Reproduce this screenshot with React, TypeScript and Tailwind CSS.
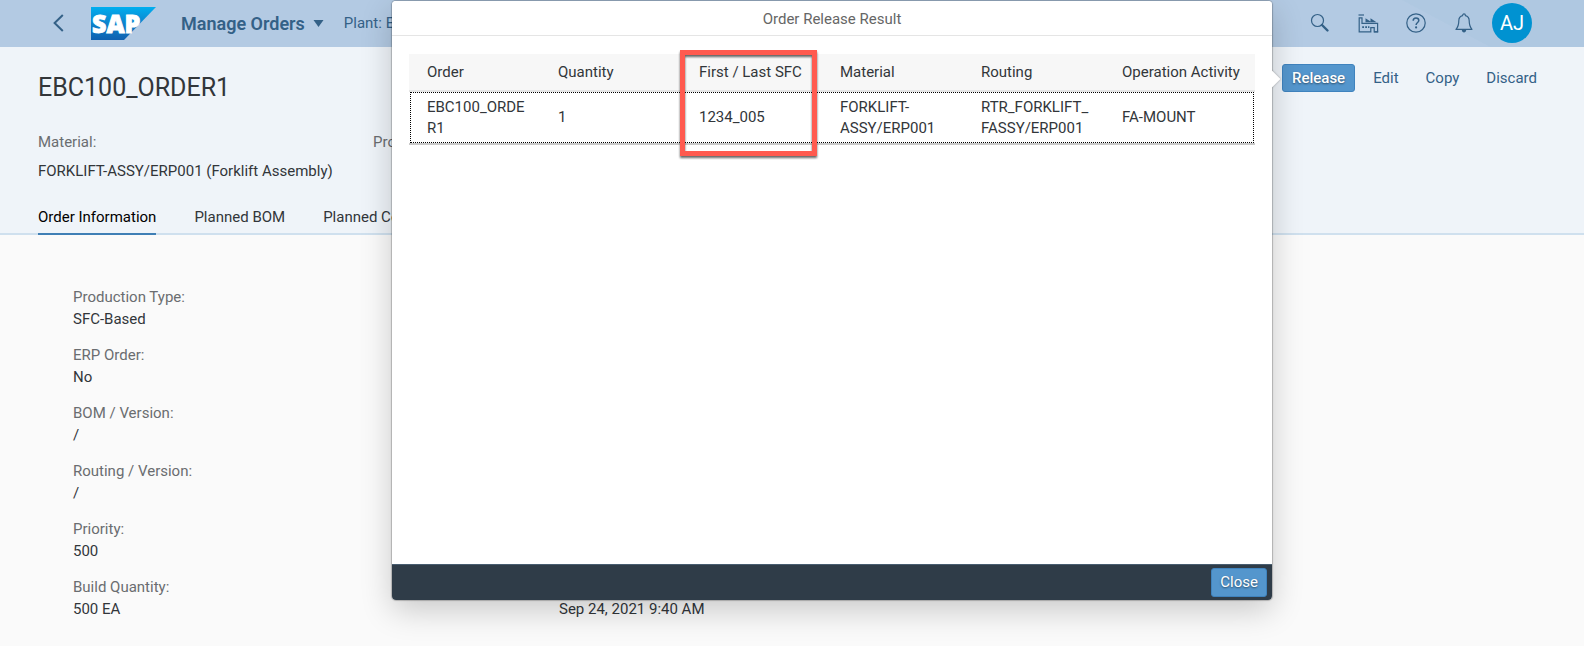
import React from "react";

const fields = [
  { label: "Production Type:", value: "SFC-Based" },
  { label: "ERP Order:", value: "No" },
  { label: "BOM / Version:", value: "/" },
  { label: "Routing / Version:", value: "/" },
  { label: "Priority:", value: "500" },
  { label: "Build Quantity:", value: "500 EA" },
];

const columns = ["Order", "Quantity", "First / Last SFC", "Material", "Routing", "Operation Activity"];

const rows = [["EBC100_ORDER1", "1", "1234_005", "FORKLIFT-ASSY/ERP001", "RTR_FORKLIFT_FASSY/ERP001", "FA-MOUNT"]];

function SapLogo() {
  return (
    <svg width="65" height="33" viewBox="0 0 65 33" role="img" aria-label="SAP">
      <defs>
        <linearGradient id="sap" x1="0" y1="0" x2="0" y2="1">
          <stop offset="0" stopColor="#00aeef" />
          <stop offset="0.5" stopColor="#0d83cc" />
          <stop offset="1" stopColor="#0f60b0" />
        </linearGradient>
      </defs>
      <path d="M0 0H65L33 33H0Z" fill="url(#sap)" />
      <text
        x="1"
        y="25.5"
        fontFamily="'Open Sans', 'Liberation Sans', sans-serif"
        fontWeight="800"
        fontSize="25"
        fill="#fff"
        stroke="#fff"
        strokeWidth="0.9"
      >
        SAP
      </text>
    </svg>
  );
}

function SearchIcon() {
  return (
    <svg width="20" height="20" viewBox="0 0 20 20" fill="none" stroke="currentColor">
      <circle cx="7.5" cy="7.5" r="6" strokeWidth="1.2" />
      <path d="M12 12L17.5 17.5" strokeWidth="2.4" strokeLinecap="round" />
    </svg>
  );
}

function FactoryIcon() {
  return (
    <svg width="21" height="19" viewBox="0 0 21 19" fill="none" stroke="currentColor" strokeWidth="1.2">
      <path d="M0.5 1H6" />
      <path d="M1.2 18V3.8H4V9.4H19.6V17.8H16.2V13.6H12.8V17.8H0.6" />
      <path d="M7.5 8.2V4.2L12.5 7.6V4.2L18.5 8.2Z" fill="currentColor" stroke="none" />
      <path d="M4.2 13.2H6M7.2 13.2H9M10 13.2H11.4" strokeWidth="1.8" />
      <path d="M16 17.8H20.2" />
    </svg>
  );
}

function HelpIcon() {
  return (
    <svg width="20" height="20" viewBox="0 0 20 20" fill="none" stroke="currentColor">
      <circle cx="10" cy="10" r="9.2" strokeWidth="1.2" />
      <path d="M7.2 7.8C7.2 5.9 8.4 5 10 5S12.8 6 12.8 7.5C12.8 9.5 10.1 9.5 10.1 12" strokeWidth="1.5" />
      <circle cx="10.1" cy="14.4" r="1.1" fill="currentColor" stroke="none" />
    </svg>
  );
}

function BellIcon() {
  return (
    <svg width="18" height="20" viewBox="0 0 18 20" fill="none" stroke="currentColor">
      <path
        d="M7.6 2.6C7.6 0.4 10.4 0.4 10.4 2.6C13 3.2 14.2 5.2 14.2 7.8C14.2 12.6 15 14.2 17 16.4H1C3 14.2 3.8 12.6 3.8 7.8C3.8 5.2 5 3.2 7.6 2.6Z"
        strokeWidth="1.2"
        strokeLinejoin="round"
      />
      <path d="M6.8 17H11.2C11.2 20.2 6.8 20.2 6.8 17Z" fill="currentColor" stroke="none" />
    </svg>
  );
}

function ShellBar() {
  return (
    <header className="flex h-[47px] items-center bg-[linear-gradient(28deg,#b3cae3_0,#b3cae3_calc(100%_-_86px),#afc8e1_calc(100%_-_85px))] pr-[52px] pb-px pl-[48px] text-[#346187]">
      <button aria-label="Back" className="flex w-5 justify-center">
        <svg width="11" height="18" viewBox="0 0 11 18" fill="none" stroke="currentColor" strokeWidth="2">
          <path d="M9.8 1L1.6 9L9.8 17" />
        </svg>
      </button>
      <a href="#home" className="ml-[23px]">
        <SapLogo />
      </a>
      <button className="ml-[25px] flex items-center gap-2 text-[18px] font-semibold whitespace-nowrap">
        Manage Orders
        <svg width="11" height="7" viewBox="0 0 11 7" fill="currentColor">
          <path d="M0.5 0H10.5L5.5 7Z" />
        </svg>
      </button>
      <span className="ml-5 text-[15px] whitespace-nowrap">Plant: EBC100</span>
      <div className="ml-auto flex items-center gap-2">
        <button aria-label="Search" className="flex w-10 justify-center"><SearchIcon /></button>
        <button aria-label="Plant" className="flex w-10 justify-center"><FactoryIcon /></button>
        <button aria-label="Help" className="flex w-10 justify-center"><HelpIcon /></button>
        <button aria-label="Notifications" className="flex w-10 justify-center"><BellIcon /></button>
        <button className="flex size-10 items-center justify-center rounded-full bg-[#0092d1] text-[20px] text-white">
          AJ
        </button>
      </div>
    </header>
  );
}

function ReleaseResult() {
  return (
    <div
      role="dialog"
      aria-labelledby="result-title"
      className="absolute -top-[63px] right-full z-10 mr-[10px] flex h-[599px] w-[880px] cursor-default flex-col rounded-[4px] bg-white text-left text-[#32363a] shadow-[0_0_1px_1px_rgba(0,0,0,0.22),0_10px_32px_0_rgba(0,0,0,0.2)]"
    >
      <div className="absolute top-[72px] -right-[6px] size-3 rotate-45 bg-white shadow-[0_0_2px_rgba(0,0,0,0.35)]" />
      <div className="relative flex grow flex-col overflow-hidden rounded-[4px] bg-white">
        <h2 id="result-title" className="h-[35px] border-b border-[#e5e5e5] text-center leading-[36px] text-[#666]">
          Order Release Result
        </h2>
        <div className="relative mx-[17px] mt-[18px] grow">
          <table className="w-full table-fixed border-collapse text-left">
            <thead>
              <tr className="h-[37px] border-b-2 border-[#e5e5e5] bg-[#f7f7f7]">
                {columns.map((c) => (
                  <th key={c} className="pl-2 font-normal whitespace-nowrap first:pl-[18px]">
                    {c}
                  </th>
                ))}
              </tr>
            </thead>
            <tbody>
              {rows.map((r) => (
                <tr
                  key={r[0]}
                  className="h-[53px] border-b-2 border-[#c8c8c8] leading-[21px] outline-1 -outline-offset-2 outline-black outline-dotted"
                >
                  {r.map((v) => (
                    <td key={v} className="py-1 pr-5 pl-2 align-middle wrap-anywhere first:pl-[18px]">
                      {v}
                    </td>
                  ))}
                </tr>
              ))}
            </tbody>
          </table>
          <div className="pointer-events-none absolute -top-1 left-[32%] h-[106px] w-[137px] border-[5px] border-[#ff5a4f] drop-shadow-[0_2px_1px_rgba(0,0,0,0.6)]" />
        </div>
        <footer className="flex h-[36px] items-center justify-end border-t border-[#485d70] bg-[#2f3c48] pr-[5px]">
          <button className="h-[29px] rounded-[3px] border border-[#3f83be] bg-[#5496cd] px-2 text-white [text-shadow:0_1px_2px_rgba(0,0,0,0.5)]">
            Close
          </button>
        </footer>
      </div>
    </div>
  );
}

export default function App() {
  return (
    <div className="min-h-screen overflow-hidden bg-[#fafafa] font-[Roboto,'Liberation_Sans',sans-serif] text-[15px] text-[#32363a]">
      <ShellBar />
      <section className="border-b-2 border-[#cfe0ee] bg-[#eff4f9] px-[38px]">
        <div className="flex justify-between pt-[17px]">
          <h1 className="pt-[9px] text-[25px] leading-[30px]">EBC100_ORDER1</h1>
          <div className="flex h-7 gap-[9px] text-[#346187]">
            <div className="relative">
              <button className="h-7 rounded-[3px] border border-[#3f83be] bg-[#5496cd] px-[9px] font-medium text-white [text-shadow:0_1px_2px_rgba(0,0,0,0.5)]">
                Release
              </button>
              <ReleaseResult />
            </div>
            <button className="px-[9px]">Edit</button>
            <button className="px-[9px]">Copy</button>
            <button className="px-[9px]">Discard</button>
          </div>
        </div>
        <dl className="mt-[25px] flex">
          <div className="w-[335px] leading-[29px] whitespace-nowrap">
            <dt className="text-[#6a6d70]">Material:</dt>
            <dd>FORKLIFT-ASSY/ERP001 (Forklift Assembly)</dd>
          </div>
          <div className="leading-[29px]">
            <dt className="text-[#6a6d70]">Production</dt>
          </div>
        </dl>
        <nav className="-mb-[2px] flex gap-[38px] pt-[14px]">
          <a href="#info" className="h-[35px] border-b-2 border-[#3f7fb5] leading-[34px] text-black">Order Information</a>
          <a href="#bom" className="h-[35px] leading-[34px]">Planned BOM</a>
          <a href="#components" className="h-[35px] leading-[34px]">Planned Components</a>
        </nav>
      </section>
      <main className="grid grid-cols-3 pt-[51px] pr-[53px] pl-[73px] leading-[22px]">
        <dl className="flex flex-col gap-[14px]">
          {fields.map((f) => (
            <div key={f.label}>
              <dt className="text-[#6a6d70]">{f.label}</dt>
              <dd>{f.value}</dd>
            </div>
          ))}
        </dl>
        <div className="flex flex-col justify-end">
          <p>Sep 24, 2021 9:40 AM</p>
        </div>
      </main>
    </div>
  );
}
